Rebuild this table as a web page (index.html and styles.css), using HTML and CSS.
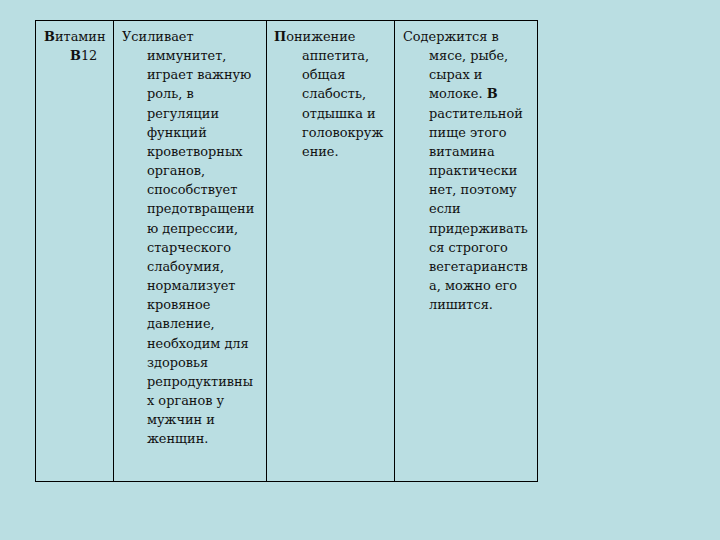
FILE: index.html
```html
<!DOCTYPE html>
<html lang="ru">
<head>
<meta charset="utf-8">
<link rel="stylesheet" href="styles.css">
</head>
<body>
<table class="vt">
<tr>
<td class="c1">
<div class="ln first"><b>В</b>итамин</div>
<div class="ln"><b>В</b>12</div>
</td>
<td class="c2">
<div class="ln first">Усиливает</div>
<div class="ln">иммунитет,</div>
<div class="ln">играет важную</div>
<div class="ln">роль, в</div>
<div class="ln">регуляции</div>
<div class="ln">функций</div>
<div class="ln">кроветворных</div>
<div class="ln">органов,</div>
<div class="ln">способствует</div>
<div class="ln">предотвращени</div>
<div class="ln">ю депрессии,</div>
<div class="ln">старческого</div>
<div class="ln">слабоумия,</div>
<div class="ln">нормализует</div>
<div class="ln">кровяное</div>
<div class="ln">давление,</div>
<div class="ln">необходим для</div>
<div class="ln">здоровья</div>
<div class="ln">репродуктивны</div>
<div class="ln">х органов у</div>
<div class="ln">мужчин и</div>
<div class="ln">женщин.</div>
</td>
<td class="c3">
<div class="ln first"><b>П</b>онижение</div>
<div class="ln">аппетита,</div>
<div class="ln">общая</div>
<div class="ln">слабость,</div>
<div class="ln">отдышка и</div>
<div class="ln">головокруж</div>
<div class="ln">ение.</div>
</td>
<td class="c4">
<div class="ln first">Содержится в</div>
<div class="ln">мясе, рыбе,</div>
<div class="ln">сырах и</div>
<div class="ln">молоке. <b>В</b></div>
<div class="ln">растительной</div>
<div class="ln">пище этого</div>
<div class="ln">витамина</div>
<div class="ln">практически</div>
<div class="ln">нет, поэтому</div>
<div class="ln">если</div>
<div class="ln">придерживать</div>
<div class="ln">ся строгого</div>
<div class="ln">вегетарианств</div>
<div class="ln">а, можно его</div>
<div class="ln">лишится.</div>
</td>
</tr>
</table>
</body>
</html>
```
FILE: styles.css
```css
html, body {
  margin: 0;
  padding: 0;
  background: #badee2;
  width: 720px;
  height: 540px;
  overflow: hidden;
}
body {
  padding: 20px 0 0 35px;
  box-sizing: border-box;
  font-family: "DejaVu Serif", "Liberation Serif", serif;
  font-size: 12.9px;
  color: #111;
}
.vt {
  border-collapse: collapse;
  height: 462px;
}
.vt td {
  border: 1.5px solid #000;
  vertical-align: top;
  padding: 6px 0 0 0;
  box-sizing: border-box;
}
.c1 { width: 78px; }
.c2 { width: 153px; }
.c3 { width: 128px; }
.c4 { width: 143px; }
.ln {
  line-height: 19.15px;
  white-space: nowrap;
  padding-left: 34px;
}
.c1 .ln { padding-left: 34px; }
.c2 .ln { padding-left: 33px; }
.c3 .ln { padding-left: 35px; }
.c4 .ln { padding-left: 34px; }
.ln.first { padding-left: 8px; }
.c2 .ln.first { padding-left: 8px; }
.c3 .ln.first { padding-left: 7px; }
.ln b { font-weight: bold; }
```
